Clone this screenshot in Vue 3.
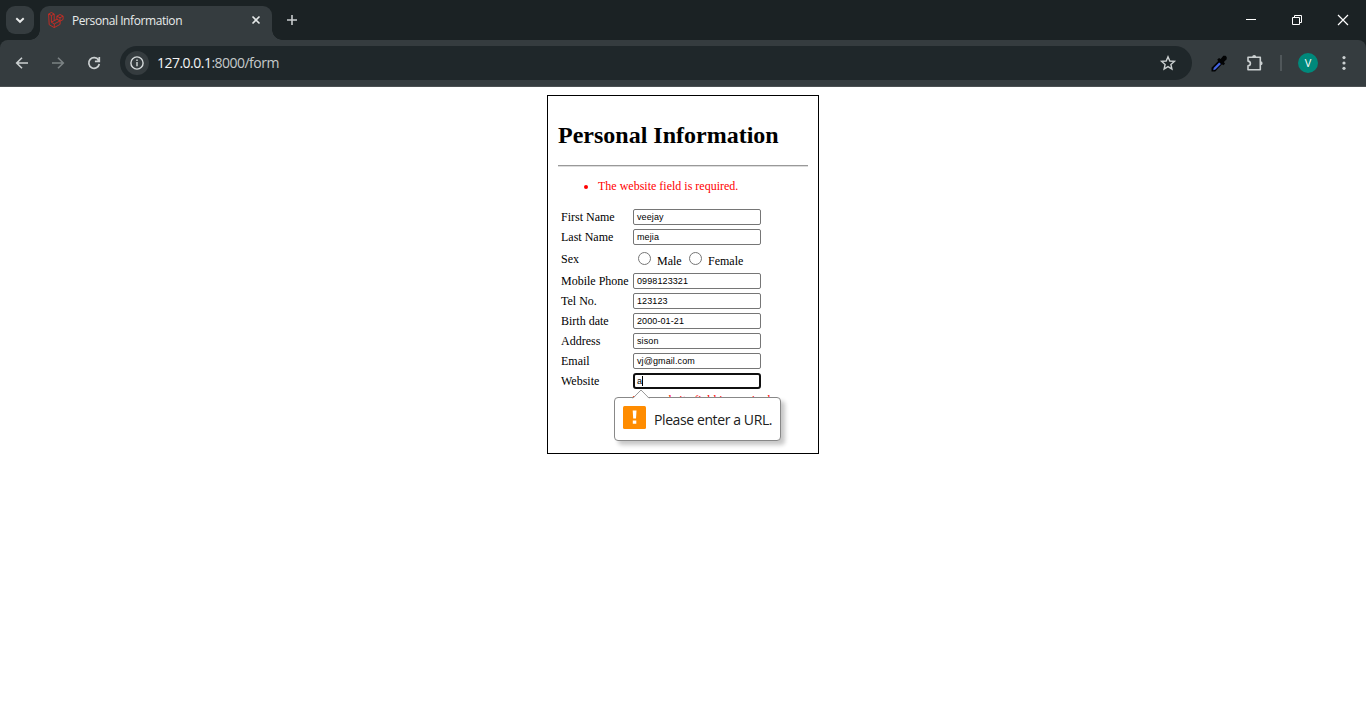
<script setup>
const topFields = [
  { label: 'First Name', value: 'veejay' },
  { label: 'Last Name', value: 'mejia' }
]
const fields = [
  { label: 'Mobile Phone', value: '0998123321' },
  { label: 'Tel No.', value: '123123' },
  { label: 'Birth date', value: '2000-01-21' },
  { label: 'Address', value: 'sison' },
  { label: 'Email', value: 'vj@gmail.com' }
]
</script>

<template>
  <div class="window">
    <header class="tabs">
      <div class="search-tabs">
        <svg width="28" height="28" viewBox="0 0 28 28"><path d="M10.3 12.2 14 15.8l3.7-3.6" fill="none" stroke="#e8eaea" stroke-width="1.9" /></svg>
      </div>
      <div class="tab">
        <svg class="logo" width="16" height="16" viewBox="0 0 16 16">
          <path d="M.6 2 3.4.5 6.2 2v6.7l2.7-1.5V4.1l3.1-1.6 3.1 1.6v3.4l-3 1.7v3.2l-5.9 3.2-5-2.9zM.6 2l2.8 1.5L6.2 2M3.4 3.5v6.7l2.8-1.5M3.4 10.2l2.9 1.7 5.8-3M6.3 11.9v3.7M8.9 4.1 12 5.8l3.1-1.7M12 5.8v3.3M8.9 7.2l3.2 1.8" fill="none" stroke="#d42c22" stroke-width=".85" />
        </svg>
        <span class="tab-title">Personal Information</span>
        <svg class="close" width="16" height="16" viewBox="0 0 16 16"><path d="m4.5 4.5 7 7m0-7-7 7" stroke="#e5e8e8" stroke-width="1.6" /></svg>
      </div>
      <svg class="plus" width="16" height="16" viewBox="0 0 16 16"><path d="M8 3v10M3 8h10" stroke="#c9cdce" stroke-width="1.6" /></svg>
      <div class="controls">
        <svg width="46" height="40" viewBox="0 0 46 40"><path d="M18 19.5h10" stroke="#fff" /></svg>
        <svg width="46" height="40" viewBox="0 0 46 40"><path d="M18.5 17.5h7v7h-7zM20.5 17.5v-2h7v7h-2" fill="none" stroke="#fff" /></svg>
        <svg width="46" height="40" viewBox="0 0 46 40"><path d="m18 15 10 10m0-10L18 25" stroke="#fff" stroke-width="1.2" /></svg>
      </div>
    </header>

    <div class="toolbar-back">
      <nav class="toolbar">
        <svg class="nav-icon" width="16" height="16" viewBox="0 0 16 16"><path d="M14 8H2.8M8 2.7 2.7 8 8 13.3" fill="none" stroke="#cbd0d1" stroke-width="1.6" /></svg>
        <svg class="nav-icon" width="16" height="16" viewBox="0 0 16 16"><path d="M2 8h11.2M8 2.7 13.3 8 8 13.3" fill="none" stroke="#7b8284" stroke-width="1.6" /></svg>
        <svg class="nav-icon" width="16" height="16" viewBox="0 0 16 16"><path d="M12.6 5.2A5.3 5.3 0 1 0 13.3 9M13.3 2v4.4H8.9" fill="none" stroke="#cbd0d1" stroke-width="1.7" /></svg>
        <div class="address">
          <div class="info">
            <svg width="16" height="16" viewBox="0 0 16 16"><circle cx="8" cy="8" r="6.1" fill="none" stroke="#d5dadb" stroke-width="1.4" /><path d="M8 7v4.3M8 4.6v1.5" stroke="#d5dadb" stroke-width="1.4" /></svg>
          </div>
          <span class="url"><b>127.0.0.1</b>:8000/form</span>
          <svg class="star" width="18" height="18" viewBox="0 0 18 18"><path d="m9 2.8 1.8 4.2 4.6.4-3.5 3.1 1 4.5L9 12.6 5.1 15l1-4.5-3.5-3.1 4.6-.4z" fill="none" stroke="#cbd0d1" stroke-width="1.4" /></svg>
        </div>
        <svg class="dropper" width="16" height="17" viewBox="0 0 16 17">
          <path d="M.5 16.5v-3.8L7.2 6 6.2 4.8 8 3.1l1.7 1L12.3.8h2.2l1.2 1.3v2.2L12.9 7l1.1 1.7-1.8 1.6-1.2-1-6.8 7.2z" fill="#020304" />
          <path d="m2.3 15.2.4-2.3 5.5-5.5 1.7 1.7-5.5 5.5z" fill="#4464e0" />
        </svg>
        <svg class="puzzle" width="18" height="18" viewBox="0 0 18 18">
          <path d="M2 3.2h12.3v12.6H2v-3.9c3.2-.4 3.2-4.4 0-4.8z" fill="none" stroke="#cbd0d1" stroke-width="1.6" stroke-linejoin="round" />
          <path d="M6.2 3a2 2 0 0 1 4 0zM14.6 7.2a2 2 0 0 1 0 4z" fill="#cbd0d1" />
        </svg>
        <i class="divider"></i>
        <span class="avatar">V</span>
        <svg class="menu" width="16" height="16" viewBox="0 0 16 16" fill="#cbd0d1"><circle cx="8" cy="2.6" r="1.6" /><circle cx="8" cy="8" r="1.6" /><circle cx="8" cy="13.3" r="1.6" /></svg>
      </nav>
    </div>

    <main>
      <form class="card" @submit.prevent>
        <h1>Personal Information</h1>
        <hr>
        <ul><li>The website field is required.</li></ul>
        <div class="fields">
          <div v-for="f in topFields" :key="f.label" class="row">
            <label>{{ f.label }}</label><div class="input">{{ f.value }}</div>
          </div>
          <div class="row sex">
            <label>Sex</label>
            <div class="radios"><i class="radio"></i><span class="male">Male</span><i class="radio"></i><span>Female</span></div>
          </div>
          <div v-for="f in fields" :key="f.label" class="row">
            <label>{{ f.label }}</label><div class="input">{{ f.value }}</div>
          </div>
          <div class="row">
            <label>Website</label>
            <div class="input focused">a<i class="caret"></i></div>
          </div>
          <div class="error">The website field is required.</div>
        </div>
        <div class="bubble">
          <svg class="pointer" width="18" height="10" viewBox="0 0 18 10"><path d="M1 9.5 9 1.2l8 8.3V10H1z" fill="#fff" /><path d="M.8 9.3 9 1l8.2 8.3" fill="none" stroke="#999" /></svg>
          <svg width="23" height="23" viewBox="0 0 23 23"><rect width="23" height="23" rx="1.5" fill="#ff8c00" /><path d="M9.7 4.5h3.8l-.5 8h-2.8zM9.8 14.6h3.5v3.2H9.8z" fill="#fff" /></svg>
          <span>Please enter a URL.</span>
        </div>
      </form>
    </main>
  </div>
</template>

<style>
body { margin: 0; background: #fff; overflow: hidden; }
</style>

<style scoped>
* { box-sizing: border-box; }
svg { display: block; flex: none; }
.window { height: 728px; font-family: "Open Sans", "Noto Sans", sans-serif; background: #fff; }
.tabs { height: 40px; display: flex; background: #1b2224; padding-left: 6px; }
.search-tabs { width: 28px; height: 28px; margin-top: 6px; border-radius: 9px; background: #353c3f; }
.tab { position: relative; width: 232px; height: 34px; margin: 6px 0 0 6px; padding: 0 8px; border-radius: 9px 9px 0 0; background: #353c3f; display: flex; align-items: center; padding-bottom: 6px; }
.tab::before, .tab::after { content: ""; position: absolute; bottom: 0; width: 10px; height: 10px; }
.tab::before { left: -10px; background: radial-gradient(circle at 0 0, transparent 9.5px, #353c3f 10px); }
.tab::after { right: -10px; background: radial-gradient(circle at 100% 0, transparent 9.5px, #353c3f 10px); }
.tab-title { margin: 2px 0 0 8px; font-size: 12px; line-height: 18px; color: #e8ebeb; letter-spacing: -.42px; white-space: nowrap; }
.close { margin-left: auto; }
.plus { margin: 12px 0 0 12px; }
.controls { display: flex; margin-left: auto; }
.toolbar-back { background: #1b2224; }
.toolbar { height: 47px; display: flex; align-items: center; background: linear-gradient(#353c3f 0 46px, #4b5052 46px); padding: 0 14px 1px; border-radius: 8px 8px 0 0; }
.nav-icon { margin-right: 20px; }
.address { width: 1072px; height: 34px; margin-left: -2px; border-radius: 17px; background: #1f272a; display: flex; align-items: center; padding: 0 15px 0 5px; }
.info { width: 24px; height: 24px; border-radius: 50%; background: #353c3f; display: grid; place-items: center; }
.url { margin-left: 8px; font-size: 14px; line-height: 20px; letter-spacing: -.52px; color: #c5cacb; white-space: nowrap; }
.url b { font-weight: 400; color: #f2f4f4; }
.star { margin-left: auto; }
.dropper { margin-left: 19px; }
.puzzle { margin-left: 19px; }
.divider { width: 2px; height: 16px; margin-left: 16px; background: #50575a; }
.avatar { width: 20px; height: 20px; margin-left: 16px; border-radius: 50%; background: #00897b; color: #fff; font-size: 11px; line-height: 20px; text-align: center; }
.menu { margin-left: 18px; }
main { padding-top: 8px; }
.card { position: relative; width: 272px; height: 359px; margin: 0 auto; border: 1px solid #000; padding: 0 10px; font-family: "Liberation Serif", serif; font-size: 12px; color: #000; }
h1 { margin: 25px 0 0; height: 44px; font-size: 24px; line-height: 28px; white-space: nowrap; }
hr { height: 2px; margin: 0; border: 0; border-top: 1px solid #999; border-bottom: 1px solid #ddd; }
ul { margin: 11px 0 0; padding-left: 40px; height: 31px; color: red; }
li, .error { line-height: 16px; white-space: nowrap; }
.fields { padding-left: 3px; }
.row { display: flex; height: 20px; align-items: flex-start; }
.row label { width: 72px; line-height: 17px; white-space: nowrap; }
.row.sex { height: 24px; }
.sex label { line-height: 21px; }
.input { display: flex; align-items: center; width: 128px; height: 16px; padding: 0 0 0 3px; border: 1px solid #767676; border-radius: 2px; font-family: "Liberation Sans", Arial, sans-serif; font-size: 9px; line-height: 14px; letter-spacing: .1px; background: #fff; }
.focused { border: 2px solid #101010; border-radius: 3px; padding-left: 2px; }
.caret { width: 1px; height: 10px; background: #000; }
.radios { display: flex; padding-left: 5px; line-height: 17px; }
.radios span { margin: 4px 0 0 6px; }
.radios .male { width: 32px; margin-right: 0; }
.radio { width: 13px; height: 13px; margin-top: 3px; border: 1px solid #767676; border-radius: 50%; background: #fff; }
.error { margin: -1px 0 0 72px; color: red; }
.bubble { position: absolute; left: 66px; top: 301px; width: 167px; height: 44px; border: 1px solid #888; border-radius: 4px; background: #fff; display: flex; align-items: center; padding: 0 0 3px 8px; box-shadow: 4px 4px 4px rgba(0,0,0,.22); font-family: "Open Sans", "Noto Sans", sans-serif; font-size: 14px; letter-spacing: -.4px; white-space: nowrap; color: #202020; }
.bubble span { margin: 3px 0 0 8px; }
.pointer { position: absolute; left: 17px; top: -9px; }
</style>
